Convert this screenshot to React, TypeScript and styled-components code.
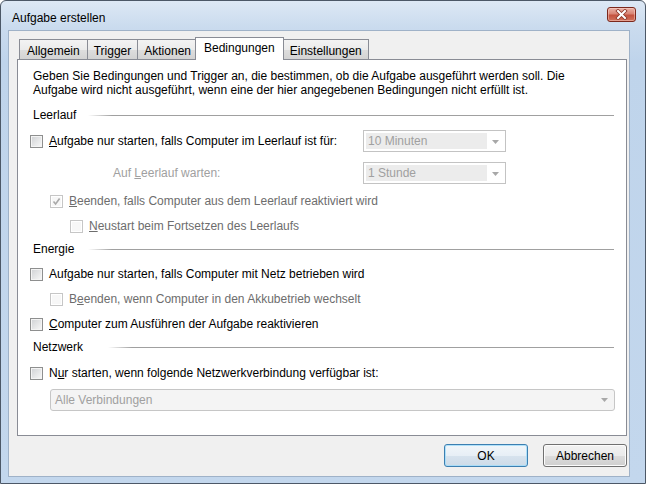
import React from 'react';
import styled, { createGlobalStyle } from 'styled-components';

const GlobalStyle = createGlobalStyle`
  html, body {
    margin: 0;
    padding: 0;
    background: #ffffff;
  }
  body {
    font-family: "Liberation Sans", Arial, sans-serif;
    font-size: 12px;
    color: #000000;
  }
  * {
    box-sizing: border-box;
  }
`;

const Window = styled.div`
  width: 646px;
  height: 484px;
  display: flex;
  flex-direction: column;
  border: 1px solid #4c5867;
  border-radius: 6px 6px 0 0;
  background: linear-gradient(to bottom, #dde8f5 0px, #cadbee 26px, #bfd4eb 60px, #c3d7ed 100%);
  overflow: hidden;
`;

const TitleBar = styled.div`
  height: 29px;
  flex: none;
  display: flex;
  align-items: center;
  justify-content: space-between;
  padding: 0 9px 0 11px;
`;

const Title = styled.span`
  font-size: 12px;
  color: #000000;
  padding-top: 4px;
`;

const CloseButton = styled.div`
  width: 29px;
  height: 15px;
  margin-top: -2px;
  display: flex;
  align-items: center;
  justify-content: center;
  border: 1px solid #7b281c;
  border-radius: 3px;
  background: linear-gradient(to bottom, #eab2a6 0%, #d98474 45%, #c4523e 55%, #d0735d 100%);
  box-shadow: inset 0 0 0 1px rgba(255, 220, 210, 0.45);
`;

const FrameBody = styled.div`
  flex: 1;
  display: flex;
  padding: 0 15px 6px 7px;
`;

const Client = styled.div`
  flex: 1;
  display: flex;
  flex-direction: column;
  background: #f0f0f0;
  border: 1px solid #9fb2c8;
  padding: 6px 2px 9px 8px;
`;

const TabStrip = styled.div`
  height: 22px;
  flex: none;
  display: flex;
  align-items: flex-end;
  padding-left: 2px;
`;

const Tab = styled.div<{ $active?: boolean; $pad?: number }>`
  position: relative;
  height: ${p => (p.$active ? '23px' : '20px')};
  margin: ${p => (p.$active ? '0 -1px -1px -2px' : '0 -1px 0 0')};
  padding: ${p => (p.$active ? '3px 8px 0' : `4px ${p.$pad ?? 6}px 0`)};
  z-index: ${p => (p.$active ? 2 : 1)};
  line-height: 15px;
  white-space: nowrap;
  border: 1px solid #898c95;
  border-bottom: none;
  background: ${p =>
    p.$active
      ? '#ffffff'
      : 'linear-gradient(to bottom, #f3f3f3 0%, #ebebeb 50%, #dedede 50%, #d3d3d3 100%)'};
`;

const Panel = styled.div`
  flex: 1;
  display: flex;
  flex-direction: column;
  background: #ffffff;
  border: 1px solid #898c95;
  padding: 0 11px 0 12px;
`;

const Description = styled.p`
  margin: 9px 0 0 3px;
  line-height: 14px;
`;

const Section = styled.div<{ $mt: number }>`
  display: flex;
  align-items: center;
  height: 14px;
  margin: ${p => p.$mt}px 1px 0 3px;
`;

const SectionTitle = styled.span<{ $w: number }>`
  width: ${p => p.$w}px;
  flex: none;
  line-height: 14px;
`;

const Rule = styled.div`
  flex: 1;
  height: 1px;
  background: linear-gradient(to right, rgba(160, 160, 160, 0) 0px, #a0a0a0 24px, #a0a0a0 100%);
`;

const Row = styled.div<{ $mt: number; $indent?: number }>`
  display: flex;
  align-items: center;
  height: 16px;
  margin-top: ${p => p.$mt}px;
  padding-left: ${p => p.$indent ?? 0}px;
`;

const ComboRow = styled.div<{ $mt: number }>`
  display: grid;
  grid-template-columns: 333px 143px;
  align-items: center;
  height: 22px;
  margin-top: ${p => p.$mt}px;
`;

const Check = styled.label`
  display: flex;
  align-items: center;
  gap: 6px;
  white-space: nowrap;
`;

const Box = styled.span<{ $disabled?: boolean }>`
  width: 13px;
  height: 13px;
  flex: none;
  display: flex;
  align-items: center;
  justify-content: center;
  border: 1px solid ${p => (p.$disabled ? '#c6c6c6' : '#8e8f8f')};
  background: ${p =>
    p.$disabled
      ? '#f7f7f7'
      : 'linear-gradient(135deg, #cfd1d4 0%, #e6e7e8 55%, #f8f8f8 100%)'};
  box-shadow: inset 0 0 0 1px ${p => (p.$disabled ? '#ffffff' : '#f4f4f4')};
`;

const Label = styled.span<{ $disabled?: boolean }>`
  line-height: 16px;
  color: ${p => (p.$disabled ? '#6d6d6d' : '#000000')};
`;

const FieldLabel = styled.span`
  padding-left: 83px;
  color: #a0a0a0;
  line-height: 16px;
`;

const SmallCombo = styled.div`
  height: 22px;
  display: flex;
  align-items: center;
  padding: 0 2px;
  border: 1px solid #c3c3c3;
  background: #ffffff;
`;

const ComboField = styled.span`
  width: 121px;
  height: 16px;
  line-height: 16px;
  padding-left: 2px;
  background: #ececec;
  color: #a0a0a0;
`;

const ArrowSlot = styled.span`
  flex: 1;
  display: flex;
  justify-content: center;
  padding-top: 1px;
`;

const WideCombo = styled.div`
  height: 22px;
  margin: 8px 0 0 20px;
  display: flex;
  align-items: center;
  justify-content: space-between;
  padding: 0 6px 0 4px;
  border: 1px solid #c6c6c6;
  border-radius: 3px;
  background: #f4f4f4;
  color: #a0a0a0;
`;

const ButtonRow = styled.div`
  flex: none;
  display: flex;
  justify-content: flex-end;
  gap: 15px;
  margin-top: 8px;
`;

const Button = styled.button<{ $default?: boolean }>`
  width: 84px;
  height: 23px;
  padding: 0;
  font-family: inherit;
  font-size: 12px;
  color: #000000;
  border-radius: 3px;
  border: 1px solid ${p => (p.$default ? '#3c7fb1' : '#707070')};
  background: ${p =>
    p.$default
      ? 'linear-gradient(to bottom, #f1f6fa 0%, #e7eff6 50%, #d7e3ee 50%, #cddbe8 100%)'
      : 'linear-gradient(to bottom, #f2f2f2 0%, #ebebeb 50%, #dddddd 50%, #cfcfcf 100%)'};
  box-shadow: inset 0 0 0 1px ${p => (p.$default ? 'rgba(160, 220, 250, 0.8)' : '#fcfcfc')};
`;

const Arrow = () => (
  <svg width="7" height="4" viewBox="0 0 7 4">
    <path d="M0 0 L7 0 L3.5 4 Z" fill="#a8a8a8" />
  </svg>
);

const CloseGlyph = () => (
  <svg width="13" height="11" viewBox="0 0 13 11">
    <path d="M3 2 L10 9 M10 2 L3 9" stroke="#8a3426" strokeWidth="3.6" strokeLinecap="square" />
    <path d="M3 2 L10 9 M10 2 L3 9" stroke="#ffffff" strokeWidth="2" strokeLinecap="square" />
  </svg>
);

const Tick = () => (
  <svg width="9" height="9" viewBox="0 0 9 9">
    <path d="M1.5 4.5 L3.6 7 L7.6 1.5" fill="none" stroke="#a9a9a9" strokeWidth="1.6" />
  </svg>
);

type CheckProps = {
  disabled?: boolean;
  checked?: boolean;
  children: React.ReactNode;
};

const CheckBox: React.FC<CheckProps> = ({ disabled, checked, children }) => (
  <Check>
    <Box $disabled={disabled}>{checked && <Tick />}</Box>
    <Label $disabled={disabled}>{children}</Label>
  </Check>
);

const tabs = [
  { name: 'Allgemein', pad: 7 },
  { name: 'Trigger', pad: 6 },
  { name: 'Aktionen', pad: 6 },
  { name: 'Bedingungen', pad: 6 },
  { name: 'Einstellungen', pad: 6 },
];

const App: React.FC = () => (
  <>
    <GlobalStyle />
    <Window>
      <TitleBar>
        <Title>Aufgabe erstellen</Title>
        <CloseButton>
          <CloseGlyph />
        </CloseButton>
      </TitleBar>
      <FrameBody>
        <Client>
          <TabStrip>
            {tabs.map(t => (
              <Tab key={t.name} $active={t.name === 'Bedingungen'} $pad={t.pad}>
                {t.name}
              </Tab>
            ))}
          </TabStrip>
          <Panel>
            <Description>
              Geben Sie Bedingungen und Trigger an, die bestimmen, ob die Aufgabe ausgeführt werden soll. Die
              <br />
              Aufgabe wird nicht ausgeführt, wenn eine der hier angegebenen Bedingungen nicht erfüllt ist.
            </Description>

            <Section $mt={11}>
              <SectionTitle $w={55}>Leerlauf</SectionTitle>
              <Rule />
            </Section>
            <ComboRow $mt={8}>
              <CheckBox>
                <u>A</u>ufgabe nur starten, falls Computer im Leerlauf ist für:
              </CheckBox>
              <SmallCombo>
                <ComboField>10 Minuten</ComboField>
                <ArrowSlot>
                  <Arrow />
                </ArrowSlot>
              </SmallCombo>
            </ComboRow>
            <ComboRow $mt={10}>
              <FieldLabel>
                Auf <u>L</u>eerlauf warten:
              </FieldLabel>
              <SmallCombo>
                <ComboField>1 Stunde</ComboField>
                <ArrowSlot>
                  <Arrow />
                </ArrowSlot>
              </SmallCombo>
            </ComboRow>
            <Row $mt={9} $indent={20}>
              <CheckBox disabled checked>
                <u>B</u>eenden, falls Computer aus dem Leerlauf reaktiviert wird
              </CheckBox>
            </Row>
            <Row $mt={9} $indent={40}>
              <CheckBox disabled>
                <u>N</u>eustart beim Fortsetzen des Leerlaufs
              </CheckBox>
            </Row>

            <Section $mt={8}>
              <SectionTitle $w={55}>Energie</SectionTitle>
              <Rule />
            </Section>
            <Row $mt={10}>
              <CheckBox>
                Auf<u>g</u>abe nur starten, falls Computer mit Netz betrieben wird
              </CheckBox>
            </Row>
            <Row $mt={9} $indent={20}>
              <CheckBox disabled>
                B<u>e</u>enden, wenn Computer in den Akkubetrieb wechselt
              </CheckBox>
            </Row>
            <Row $mt={9}>
              <CheckBox>
                <u>C</u>omputer zum Ausführen der Aufgabe reaktivieren
              </CheckBox>
            </Row>

            <Section $mt={8}>
              <SectionTitle $w={75}>Netzwerk</SectionTitle>
              <Rule />
            </Section>
            <Row $mt={11}>
              <CheckBox>
                N<u>u</u>r starten, wenn folgende Netzwerkverbindung verfügbar ist:
              </CheckBox>
            </Row>
            <WideCombo>
              <span>Alle Verbindungen</span>
              <Arrow />
            </WideCombo>
          </Panel>
          <ButtonRow>
            <Button $default>OK</Button>
            <Button>Abbrechen</Button>
          </ButtonRow>
        </Client>
      </FrameBody>
    </Window>
  </>
);

export default App;
